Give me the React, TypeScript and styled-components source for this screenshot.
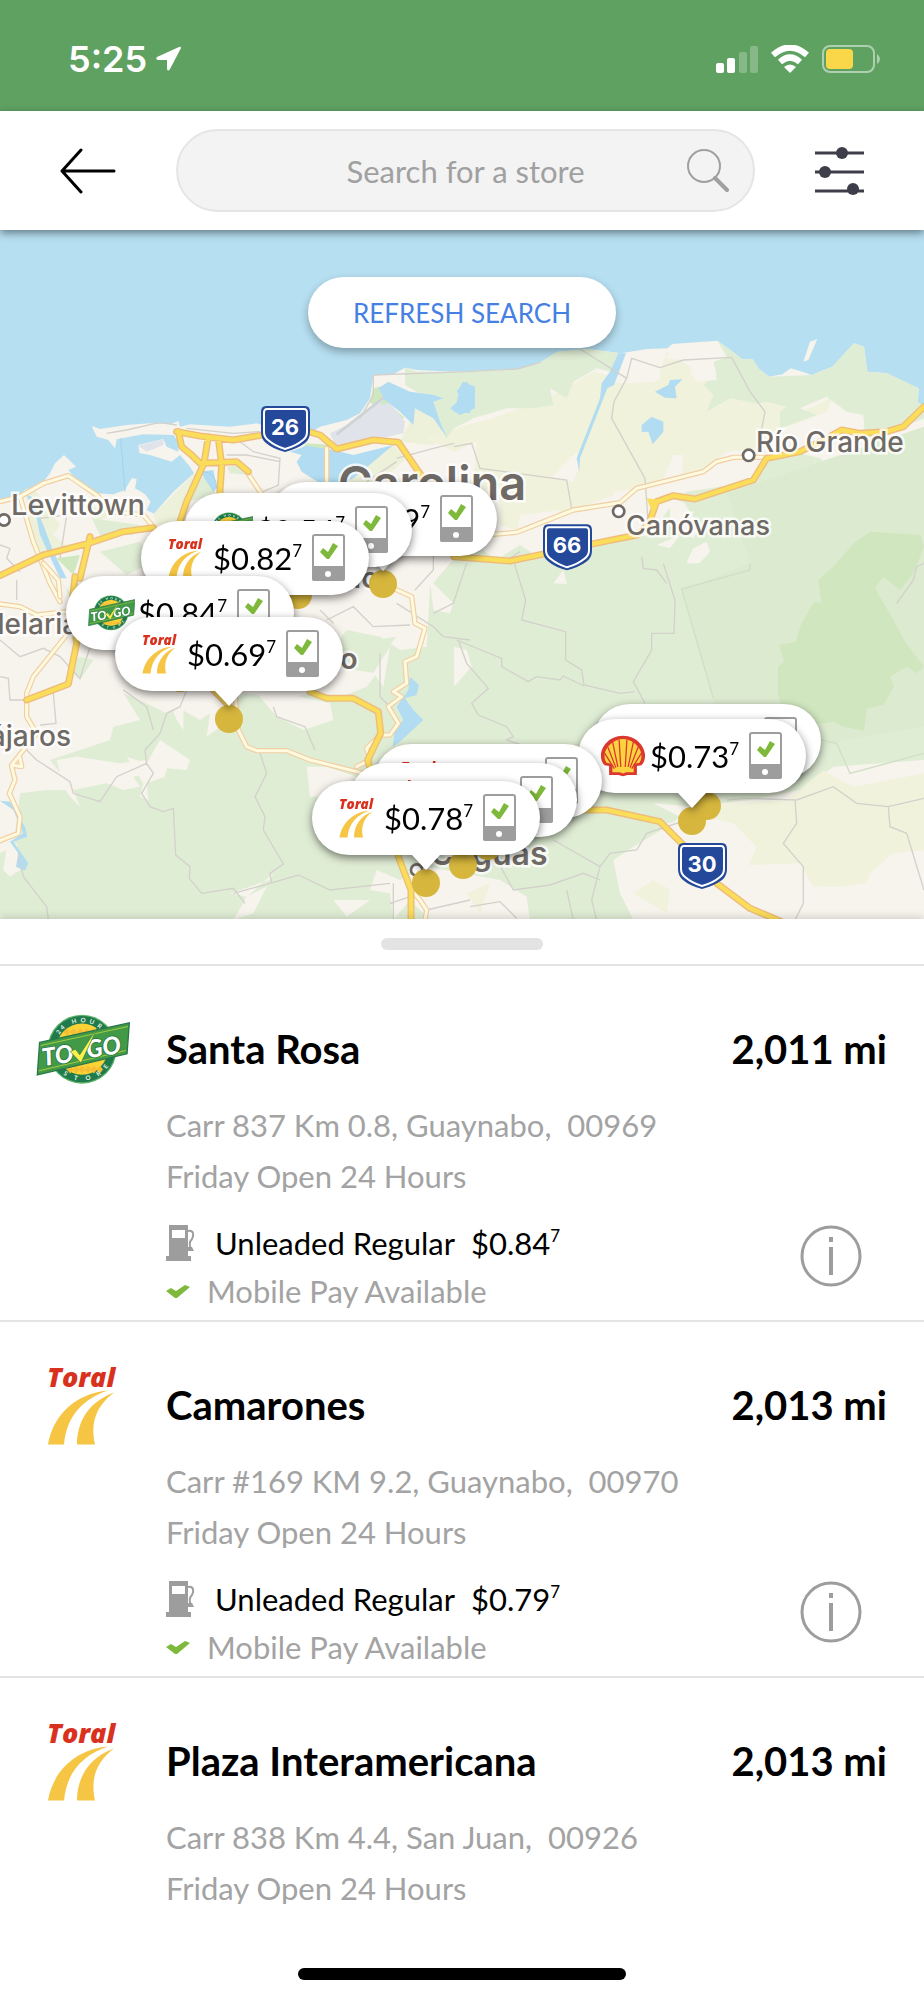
import React from "react";
import styled, { createGlobalStyle } from "styled-components";

const GlobalStyle = createGlobalStyle`
  * { box-sizing: border-box; }
  body { margin: 0; background: #fff; color: #000; font-family: Lato, "Liberation Sans", sans-serif; }
  button { font: inherit; color: inherit; background: none; border: 0; padding: 0; cursor: pointer; }
  h2, p, ul { margin: 0; padding: 0; }
  ul { list-style: none; }
  svg { display: block; flex: none; }
`;

const Screen = styled.main`
  display: flex;
  flex-direction: column;
  min-height: 100vh;
  background: #fff;
`;

const StatusBar = styled.div`
  display: flex;
  align-items: center;
  justify-content: space-between;
  height: 111px;
  padding: 6px 44px 0 68px;
  background: #5ea161;
  color: #fff;
`;

const StatusGroup = styled.div<{ $gap: number }>`
  display: flex;
  align-items: center;
  gap: ${(p) => p.$gap}px;
`;

const Clock = styled.time`
  font: 600 36px/44px Inter, sans-serif;
`;

const Header = styled.header`
  position: relative;
  z-index: 2;
  display: flex;
  align-items: center;
  gap: 60px;
  padding: 18px 60px;
  background: #fff;
  box-shadow: 0 3px 8px rgba(0, 0, 0, 0.45);
`;

const SearchField = styled.label`
  position: relative;
  flex: 1;
  min-width: 0;
  display: flex;
`;

const SearchInput = styled.input`
  width: 100%;
  height: 83px;
  padding: 0 72px;
  border: 2px solid #e5e5e5;
  border-radius: 42px;
  background: #f3f3f3;
  font: 400 31px/36px Lato, sans-serif;
  text-align: center;
  color: #333;
  outline: 0;
  &::placeholder { color: #a0a0a0; opacity: 1; }
`;

const SearchGlyph = styled.span`
  position: absolute;
  right: 26px;
  top: 20px;
`;

const MapArea = styled.section`
  position: relative;
  height: 689px;
  overflow: hidden;
  background: #b6dff1;
`;

const MapDrawing = styled.svg`
  width: 100%;
  height: 100%;
`;

const RefreshButton = styled.button`
  position: absolute;
  z-index: 1;
  top: 47px;
  left: 50%;
  transform: translateX(-50%);
  height: 71px;
  padding: 0 45px;
  border-radius: 36px;
  background: #fff;
  color: #4680e2;
  font-size: 26px;
  line-height: 32px;
  white-space: nowrap;
  box-shadow: 0 4px 8px rgba(0, 0, 0, 0.3);
`;

/* Places on the map are measured from its horizontal centre and its top edge. */
const Spot = styled.div<{ $x: number; $y: number }>`
  position: absolute;
  left: calc(50% + ${(p) => p.$x - 462}px);
  top: ${(p) => p.$y}px;
`;

const PlaceName = styled(Spot)<{ $size: number; $weight: number }>`
  font: ${(p) => p.$weight} ${(p) => p.$size}px/36px Inter, sans-serif;
  color: #6f6a65;
  white-space: nowrap;
  -webkit-text-stroke: 5px rgba(255, 255, 255, 0.8);
  paint-order: stroke fill;
`;

const Dot = styled(Spot)`
  width: 28px;
  height: 28px;
  border-radius: 50%;
  background: #d6b63d;
`;

const Pin = styled(Spot)`
  filter: drop-shadow(0 3px 4px rgba(0, 0, 0, 0.5));
`;

const PinBody = styled.button`
  display: flex;
  align-items: center;
  width: 228px;
  height: 74px;
  padding: 0 24px 0 20px;
  border-radius: 37px;
  background: #fff;
`;

const PinTail = styled.div`
  width: 28px;
  height: 15px;
  margin: 0 auto;
  background: #fff;
  clip-path: polygon(0 0, 100% 0, 50% 100%);
`;

const PinLogo = styled.span`
  display: flex;
  justify-content: center;
  width: 50px;
  margin-right: 2px;
`;

const Price = styled.span`
  flex: 1;
  font-size: 31px;
  line-height: 36px;
  text-align: left;
  white-space: nowrap;
  color: #000;
  sup { font-size: 17px; line-height: 0; vertical-align: 13px; }
`;

const Sheet = styled.section`
  position: relative;
  z-index: 1;
  flex: 1;
  display: flex;
  flex-direction: column;
  background: #fff;
  box-shadow: 0 -2px 8px rgba(0, 0, 0, 0.15);
`;

const Grip = styled.div`
  padding: 19px 0 14px;
  border-bottom: 2px solid #e4e4e4;
  &::before {
    content: "";
    display: block;
    width: 162px;
    height: 12px;
    margin: 0 auto;
    border-radius: 6px;
    background: #e3e3e3;
  }
`;

const StoreRow = styled.li`
  display: flex;
  align-items: flex-start;
  padding: 43px 37px 11px 0;
  border-bottom: 2px solid #e4e4e4;
  &:last-child { border-bottom: 0; }
`;

const StoreLogo = styled.div`
  flex: none;
  display: flex;
  align-items: center;
  justify-content: center;
  width: 166px;
  height: 80px;
`;

const StoreBody = styled.div`
  flex: 1;
  min-width: 0;
  padding-top: 16px;
`;

const TitleLine = styled.div`
  display: flex;
  justify-content: space-between;
  font-size: 40px;
  line-height: 48px;
  font-weight: 700;
  margin-bottom: 34px;
`;

const StoreName = styled.h2`
  font: inherit;
`;

const Detail = styled.p`
  font-size: 31px;
  line-height: 36px;
  color: #a3a3a3;
  white-space: pre-wrap;
`;

const Hours = styled(Detail)`
  margin-top: 15px;
  height: 34px;
  overflow: hidden;
`;

const FuelBlock = styled.div`
  display: flex;
  align-items: flex-start;
  justify-content: space-between;
  margin-top: 33px;
  padding-right: 25px;
`;

const FuelLines = styled.div`
  display: flex;
  flex-direction: column;
  gap: 12px;
`;

const FuelLine = styled.div<{ $gap: number }>`
  display: flex;
  align-items: center;
  gap: ${(p) => p.$gap}px;
  font-size: 31px;
  line-height: 36px;
`;

const FuelName = styled.span`
  margin-right: -4px;
`;

const HomeIndicator = styled.div`
  width: 328px;
  height: 12px;
  margin: auto auto 20px;
  border-radius: 6px;
  background: #000;
`;

/* ---------- brand logos ---------- */

const ring: [string, number][] = [
  ["2", -54], ["4", -42], ["H", -16], ["O", 2], ["U", 20], ["R", 37],
];
const ringLow: [string, number][] = [
  ["S", 34], ["T", 12], ["O", -12], ["R", -34], ["E", -54],
];

const ToGoLogo = ({ width }: { width: number }) => (
  <svg width={width} height={Math.round(width * 0.76)} viewBox="47 67 284 216" role="img" aria-label="To Go 24 hour store">
    <circle cx="186" cy="174" r="105" fill="#5cb267" />
    <circle cx="186" cy="174" r="101" fill="#1f7a4d" />
    <circle cx="186" cy="174" r="78" fill="#fbd336" />
    <g fill="#f6bd35">
      {[0, 1, 2, 3, 4, 5].map((i) => (
        <path key={i} d={`M${130 + i * 20} 122l10-12 10 12-10 12zM${140 + i * 18} 236l10-12 10 12-10 12z`} />
      ))}
    </g>
    <g fill="#e9f5e4" fontFamily="Lato, sans-serif" fontWeight="700" fontSize="19" textAnchor="middle">
      {ring.map(([c, a], i) => (
        <text key={i} x="186" y="92" transform={`rotate(${a} 186 174)`}>{c}</text>
      ))}
      {ringLow.map(([c, a], i) => (
        <text key={i} x="186" y="270" transform={`rotate(${a} 186 174)`}>{c}</text>
      ))}
    </g>
    <path d="M57 153 330 94 323 188 50 252z" fill="#439a46" stroke="#27774b" strokeWidth="4" />
    <path d="M60 163 326 105M54 240 320 178" stroke="#a5cc3e" strokeWidth="3" />
    <g fill="#fff" stroke="#27774b" strokeWidth="5" paintOrder="stroke" fontFamily="Lato, sans-serif" fontWeight="900" fontStyle="italic" fontSize="74">
      <text x="68" y="226" transform="rotate(-9 68 226)">TO</text>
      <text x="203" y="202" transform="rotate(-9 203 202)">GO</text>
    </g>
    <path d="M150 181 166 174 179 191 233 108 183 216z" fill="#fdf04a" stroke="#27774b" strokeWidth="2" />
  </svg>
);

const ToralLogo = ({ width }: { width: number }) => (
  <svg width={width} height={Math.round(width * 1.12)} viewBox="0 0 72 80" role="img" aria-label="Toral">
    <text x="0" y="21" fill="#d8321f" fontFamily="'Open Sans', sans-serif" fontWeight="800" fontStyle="italic" fontSize="27">Toral</text>
    <path d="M1 79C6 50 28 28 61 25 38 33 20 48 17 79z" fill="#f5c543" />
    <path d="M30 79C30 56 42 36 67 27 50 40 43 56 48 79z" fill="#f5c543" />
  </svg>
);

const ShellLogo = () => (
  <svg width="46" height="42" viewBox="437 521 140 130" role="img" aria-label="Shell">
    <path d="M464 645V617L450 615C440 605 438 592 439 580 441 558 462 524 507 523 552 524 573 558 575 580 576 592 574 605 564 615L550 617V645H521L507 649 493 645z" fill="#dd3830" />
    <path d="M474 636V611L456 607C447 594 449 577 455 566 467 546 484 534 507 533 530 534 547 546 559 566 565 577 567 594 558 607L540 611V636H517L507 640 497 636z" fill="#fbd33f" />
    <path d="M500 620 495 536M491 620 475 543M485 622 460 558M480 625 450 577M514 620 519 536M523 620 539 543M529 622 554 558M534 625 564 577" stroke="#dd3830" strokeWidth="4" />
  </svg>
);

/* ---------- icons ---------- */

const PhoneIcon = () => (
  <svg width="33" height="48" viewBox="0 0 33 48" aria-hidden="true">
    <rect x="1" y="1" width="31" height="45" rx="2" fill="#fff" stroke="#9d9d9d" strokeWidth="2" />
    <path d="M0 32H33V45a2 2 0 0 1-2 2H2a2 2 0 0 1-2-2z" fill="#9d9d9d" />
    <circle cx="16" cy="40" r="3" fill="#fff" />
    <path d="M8 18 11 14 16 18 21 9 26 12 17 25 15 25z" fill="#7fb93b" />
  </svg>
);

const PumpIcon = () => (
  <svg width="29" height="36" viewBox="0 0 29 36" aria-hidden="true">
    <path fillRule="evenodd" d="M3 0H22V31H25V36H0V31H3zM6 5V13H19V5z" fill="#9d9d9d" />
    <path d="M22 6C28 5 28 10 26 14 23 17 23 20 25 24H22" fill="none" stroke="#9d9d9d" strokeWidth="2" />
    <path d="M22 22H26L28 26H22z" fill="#9d9d9d" />
  </svg>
);

const CheckIcon = () => (
  <svg width="24" height="13" viewBox="0 0 24 13" aria-hidden="true">
    <path d="M0 6 5 3 10 6 19 0 24 2 11 13 9 13z" fill="#7fb93b" />
  </svg>
);

const InfoIcon = () => (
  <svg width="62" height="62" viewBox="0 0 62 62" fill="none" aria-hidden="true">
    <circle cx="31" cy="31" r="29" stroke="#9d9d9d" strokeWidth="3" />
    <path d="M31 12V17M31 22V50" stroke="#9d9d9d" strokeWidth="4" />
  </svg>
);

const Shield = ({ x, y, label }: { x: number; y: number; label: string }) => (
  <g transform={`translate(${x} ${y}) scale(3)`}>
    <path d="M5 0H44Q49 0 49 6V26Q49 33 44 37 36 43 24 46 12 43 5 37 0 33 0 26V6Q0 0 5 0z" fill="#24499a" />
    <path d="M6 3H43Q46 3 46 7V26Q46 31 42 34 35 40 24 43 14 40 7 34 3 31 3 26V7Q3 3 6 3z" fill="none" stroke="#fff" strokeWidth="2" />
    <text x="24" y="29" textAnchor="middle" fill="#fff" fontFamily="Inter, sans-serif" fontWeight="700" fontSize="22">{label}</text>
  </g>
);

/* ---------- map ---------- */

const Roads = ({ d, minor }: { d: string; minor?: boolean }) => (
  <g fill="none" strokeLinejoin="round" strokeLinecap="round">
    <path d={d} stroke={minor ? "#f0cfa4" : "#eebb7c"} strokeWidth={minor ? 16 : 21} />
    <path d={d} stroke={minor ? "#fefadf" : "#fadd58"} strokeWidth={minor ? 9 : 13} />
  </g>
);

const Terrain = () => (
  <MapDrawing viewBox="0 690 2772 2067" preserveAspectRatio="xMidYMin slice" aria-hidden="true">
    <rect y="690" width="2772" height="2067" fill="#b6dff1" />
    <g transform="translate(0 675)">
      <path
        fill="#f7f3ed"
        d="M0 825 55 815 75 795 130 770 150 745 165 715 192 690 228 725 205 735 225 760 290 805 340 808 375 795 395 760 410 762 405 790 435 808 452 830 440 855 462 866 520 800 582 745 570 725 540 690 515 710 450 690 418 684 415 660 490 642 500 665 535 680 535 650 520 630 430 628 350 643 345 670 325 645 290 635 275 603 300 612 380 600 450 595 510 598 535 588 540 605 570 598 690 605 770 595 800 605 930 625 960 605 1040 585 1080 565 1110 520 1120 450 1180 448 1215 428 1250 435 1362 440 1552 432 1622 412 1672 380 1762 372 1862 385 1942 372 2002 370 2017 357 2062 367 2152 347 2187 372 2227 403 2257 402 2277 432 2307 455 2347 448 2372 430 2407 440 2434 450 2497 425 2562 355 2592 365 2602 440 2662 445 2697 470 2757 490 2752 530 2772 545V2100H0z"
      />
      <path fill="#eef1d9" d="M75 800 100 790 180 900 160 930 200 960 120 1000 90 900zM225 830 340 860 300 890 260 850zM460 870 582 745 620 760 560 830 540 900 470 900zM1080 720 1180 660 1220 700 1140 770 1040 775zM1250 540 1340 600 1300 660 1200 650 1230 590z" />
      <path fill="#f0f2db" d="M1280 640 1400 600 1480 580 1640 520 1700 490 1780 440 1820 450 1870 475 1970 470 2000 380 2140 470 2250 520 2370 540 2360 570 2440 545 2500 515 2480 560 2350 610 2290 640 2270 670 2180 680 2100 740 2000 760 1900 790 1760 840 1700 860 1600 880 1560 920 1500 900 1500 800 1420 790 1430 650 1362 680z" />
      <path fill="#e0edd5" d="M1215 428 1250 440 1362 440 1552 432 1622 412 1672 380 1762 372 1862 385 1830 440 1790 430 1720 470 1700 520 1650 490 1660 540 1600 550 1520 550 1420 580 1362 610 1340 640 1300 560 1250 500 1215 480zM2152 347 2187 372 2227 403 2257 402 2277 432 2307 455 2434 450 2497 425 2562 355 2592 365 2602 440 2662 445 2757 490 2752 530 2772 545V580L2700 610 2560 640 2540 560 2480 515 2400 550 2450 570 2340 610 2340 560 2360 545 2300 530 2270 535 2190 520 2120 560 2140 510 2110 480 2150 450 2140 410 2180 395z" />
      <path fill="#e0edd5" d="M570 770 620 755 650 810 560 830zM275 880 420 900 400 930 300 930zM680 725 730 720 750 750 690 745zM300 980 420 950 460 1010 380 1050zM1362 1060 1480 1010 1560 960 1620 1000 1760 960 1880 940 1950 930 2000 860 2060 800 2260 770 2310 705 2400 685 2460 700 2500 740 2420 780 2460 830 2530 750 2590 650 2640 610 2700 690 2772 760V1120H1362z" />
      <path fill="#f7f3ed" d="M2017 357 2152 347 2180 395 2140 410 2150 465 2090 470 2070 440 2080 410 2000 400zM1870 475 1830 470 1870 385 1980 385 1980 465zM1650 760 1730 680 1740 720 1720 770zM2020 690 2050 690 2045 750 1990 760zM2410 410 2430 350 2452 342 2425 405zM2440 710 2500 740 2510 760 2475 805 2455 770 2485 755zM2540 560 2590 570 2600 700 2605 800 2580 740 2530 730 2570 700 2540 610 2440 620 2490 580zM2010 825 2050 830 2100 905 2080 940 2010 900zM1970 960 2040 930 2010 970zM2080 970 2120 950 2130 980 2080 1035 2060 1010zM1560 870 1680 855 1640 950 1550 930zM1840 800 1930 790 1960 900 1860 920z" />
      <path fill="#cfe8bf" d="M1120 490 1160 480 1155 520 1170 540 1215 580 1150 580 1110 530zM920 655 1000 660 970 675 910 665zM170 1000 240 990 220 1050z" />
      <path fill="#e0e4ea" d="M1165 505 1140 540 1170 535 1215 590 1210 625 1120 645 1010 670 990 625 1060 590zM415 662 490 643 490 660 440 680z" />
      <path fill="none" stroke="#cfd2d6" strokeWidth="8" d="M1165 507 1010 628" />
      <path fill="#b1dcf1" d="M870 680 920 662 1000 675 1060 690 1180 660 1120 710 1060 760 1030 775 960 775 905 740 890 710 905 690zM1135 490 1165 470 1230 500 1300 510 1330 520 1300 530 1320 590 1342 640 1300 580 1245 550 1240 600 1200 560 1155 525zM1370 500 1390 470 1425 485 1425 550 1380 570 1350 550 1385 520zM1362 560 1385 475 1400 470 1425 500 1410 565zM80 810 95 815 130 900 160 980 200 1060 180 1060 120 930 110 880zM600 740 640 735 650 790 640 800zM1855 385 1878 385 1842 480 1822 490 1740 700 1738 740 1730 700 1800 520 1805 475 1830 440zM1965 500 2005 480 2010 465 2048 463 2025 485 2030 520 1995 518zM1925 600 1955 575 1990 590 1990 620 1958 658 1945 620 1925 622z" />
      <path fill="none" stroke="#d3d1cb" strokeWidth="4" d="M320 625 380 615 480 592 530 600M560 610 700 625 780 620M720 650 760 680 840 700 835 780 790 800M680 690 740 690 840 710M1120 450V510L1080 580M1120 450 1400 440 1552 432 1622 412M1740 372 1880 460 1842 530 1835 580 1935 760 1945 900M1880 460 1895 400 1980 428 2050 405 2195 397 2250 500 2295 560 2270 690M1362 665 1415 655 1440 730 1700 765 1715 850M1190 700 1300 670 1362 655M1100 770 1190 710M0 960 30 970 20 1000 60 1040M120 880 200 870 180 1000M2640 620 2700 730 2772 775M2772 770 2350 900M1560 980 1530 1000 1580 1120 1570 1190" />
      <path fill="none" stroke="#a0d2f3" strokeWidth="3" d="M362 640 375 800M605 740Q650 740 650 790" />
    </g>
    <g transform="translate(0 1680)">
      <path fill="#e0edd5" d="M1500 10H2772V600L2500 620 2400 690 2250 720 2080 740 1960 730 2040 770 2000 800 1900 860 1840 900 1860 1000 1900 1080H0V880L40 860 60 700 140 690 220 690 150 600 240 570 330 540 340 500 420 480 370 400 440 430 500 460 530 440 600 480 660 440 740 400 850 420 930 400 1000 420 1100 380 1130 340 1060 330 1010 250 1040 210 1140 230 1200 270 1280 260 1290 80 1410 -60z" />
      <path fill="#dceacf" d="M2772 -400 2180 -200 2250 10 2050 90 2140 420 2250 620 2540 540 2772 500z" />
      <path fill="#d0e6bf" d="M2500 20 2562 -50 2612 -85 2762 -75 2772 -40 2740 40 2700 90 2650 50 2625 85 2685 190 2715 245 2772 320 2750 340 2720 320 2670 350 2682 380 2650 435 2600 445 2592 512 2530 500 2500 485 2400 500 2350 460 2334 400 2334 320 2352 305 2337 255 2387 245 2405 190 2442 125 2465 130 2455 60z" />
      <path fill="#f0f2db" d="M2470 630 2520 660 2560 680 2620 670 2772 640V870L2680 880 2610 940 2600 970 2520 980 2440 980 2400 910 2240 915 2270 860 2120 790 2080 740 2360 720z" />
      <path fill="#f7f3ed" d="M2120 770 2200 790 2270 860 2240 930 2400 910 2440 980 2590 1000 2570 1080H2230L2140 980 2030 940 2080 1020 2030 1040 1880 1020 1850 900 1900 870 1990 850 2000 790zM1130 930 1200 960 1280 920 1500 960 1580 1010 1590 1080H1290L1230 1020 1180 1080 1170 1000 1110 990zM190 680 170 600 230 590 360 610 440 600 450 640 400 650 420 680 370 690 320 670 220 690 240 740 210 710zM480 540 570 600 560 630 500 625 495 650 440 670 445 720 420 710 430 670 380 590 440 610zM640 390 700 420 690 480 620 530zM510 430 620 410 600 470 550 450 550 510 530 480zM770 400 850 400 990 430 1000 480 910 510 830 470zM920 620 980 620 1070 650 1080 700 930 710zM820 940 720 1030 740 1010 690 1000 810 960zM20 860 50 850 60 930 30 950 10 930zM740 1010 800 980 760 1060 700 1080zM1000 1020 1110 1020 1040 1070zM1362 260 1400 270 1415 320 1362 380zM1660 70 1690 30 1700 72zM1290 60 1360 130 1350 160 1300 150zM1170 260 1150 380 1120 340zM2720 940 2772 920V980L2680 950z" />
      <path fill="#e0edd5" d="M175 60 230 120 220 150 200 90zM200 320 240 290 280 300 240 360zM1040 220 1070 215 1050 270zM1120 240 1190 230 1140 290z" />
      <path fill="#f0f2db" d="M1400 1000 1470 970 1440 1060zM1900 1000 1960 960 2010 990 2000 1060z" />
      <path fill="#b1dcf1" d="M1230 350 1257 375 1250 405 1215 415 1240 450 1270 480 1200 545 1178 560 1185 510 1210 480 1190 440 1225 390zM0 722 30 725 75 800 82 830 40 845 85 910 75 932 48 920 55 880 30 845 70 820 40 750z" />
      <path fill="none" stroke="#d3d1cb" strokeWidth="4" d="M0 350 25 355 30 420H75M0 240 60 290 130 265 180 290 240 355 280 230M50 60V120M160 400 168 490 120 495M50 540 110 600 210 665 220 700 300 725 350 650 440 610 435 570 480 520 500 460 540 440 560 390M370 390 440 440 460 510M440 610 460 640 425 700 450 740 490 755 520 745 527 885 570 920 568 955 605 1000 700 985 735 1030M700 1000 810 970 895 945 990 990 1170 970M780 580 800 640 765 710 795 770 790 810 850 912 810 940 815 970M820 440 830 470 915 500 945 570M980 180 1060 140 1120 200 1230 195M960 150 1000 190M1300 -50V30L1245 90M1400 10 1360 130 1300 160M1190 130 1300 200 1330 230 1410 240M1140 280V410L1180 450M55 880 70 950 140 1040 145 1080M1180 970V1080M1170 1030 1260 1000M1280 1050 1410 1020M1540 1 1577 120 1565 180 1697 215V300L1745 330 1752 375 1860 400 1905 395M1370 240 1505 295V320L1585 365 1610 350 1680 360 1690 348 1752 378M1375 240 1400 310 1465 385 1415 430 1435 465 1520 500 1540 530 1520 540 1580 560M1990 10 2025 120 2022 220H1955V270L1900 365 1935 430M1925 -10 1930 25 1970 30 2000 70M2180 720 2240 715 2390 720 2500 680 2570 730 2665 740 2772 715M2385 720 2390 790 2350 850 2410 920V1030L2385 1080M2665 740 2670 800 2720 820 2772 990M1800 920 1830 880 1910 870 1940 820 2060 780M1660 840 1800 920 1775 1020 1790 1080M1480 880 1540 990 1650 975 1750 940 1800 960M1700 990 1720 1080M1410 1040 1500 1025 1550 1075M2772 10 2750 20 2740 60 2690 130" />
      <path fill="none" stroke="#d0dfc5" strokeWidth="4" d="M2250 10V30L2045 87 2140 415M2190 480 2510 550 2550 640 2772 580" />
    </g>
    <g transform="translate(0 675)">
      <Roads minor d="M0 830 60 815 130 775 205 752 290 810 340 860 430 870 460 905M60 815 100 950 150 1075 180 1130M740 740 790 815M980 670V800M1480 928 1550 922 1720 855 1860 833 1910 790 2110 740 2150 710 2200 697H2300" />
      <Roads d="M530 620 600 633 700 645 800 628M535 620 545 665 575 690 600 715 710 710 745 740M625 635 612 715 560 830 530 920M655 640 665 720 658 830M0 1052 130 990 265 955 370 920 460 908M270 935 240 1060M925 620 960 630 1010 672 1120 645 1195 652 1290 790M1362 995 1530 1008 1640 985M1770 958 1910 930 1945 900 1970 830 2020 812 2085 822 2260 765 2300 700 2400 680 2480 640 2525 615 2580 625 2660 620 2710 605 2772 545" />
      <path d="M1940 820 1980 825 1960 870z" fill="#fadd58" />
    </g>
    <g transform="translate(0 1680)">
      <Roads minor d="M0 132 60 140 110 165 200 155M130 10 175 60 180 110M220 200 100 350 80 400V470L110 520 35 615 65 620 60 595M35 620 45 660 28 700 60 770 55 820 0 842M705 400 715 510 740 560 770 572H860L930 600 1010 620 1090 640M1180 85 1235 110 1245 190 1275 205 1250 290 1215 305 1220 370 1180 395 1205 410 1165 440 1195 490 1170 525H1140L1100 565 1110 600 1070 620M1235 990 1260 1020 1280 1050 1275 1080" />
      <Roads d="M225 50 215 140 230 250 205 372 80 420M640 390 690 440M930 395 980 415H1060L1135 455 1142 520 1103 600 1130 690M1195 890 1233 990V1080M1740 750H1820L1980 785 2070 875M2150 970 2250 1045 2380 1100" />
    </g>
    <g fill="#fff" stroke="#6f6a65" strokeWidth="8">
      <circle cx="12" cy="1560" r="17" />
      <circle cx="2246" cy="1366" r="17" />
      <circle cx="1856" cy="1534" r="17" />
      <circle cx="1250" cy="2610" r="17" />
    </g>
    <Shield x={783} y={1218} label="26" />
    <Shield x={1629} y={1573} label="66" />
    <Shield x={2034} y={2529} label="30" />
  </MapDrawing>
);

const places = [
  { name: "Levittown", x: 11, y: 257, size: 29, weight: 500 },
  { name: "Río Grande", x: 756, y: 194, size: 28, weight: 500 },
  { name: "Canóvanas", x: 626, y: 278, size: 27, weight: 500 },
  { name: "Carolina", x: 338, y: 235, size: 47, weight: 600 },
  { name: "Candelaria", x: -66, y: 376, size: 28, weight: 500 },
  { name: "Pájaros", x: -28, y: 488, size: 28, weight: 500 },
  { name: "Trujillo", x: 284, y: 330, size: 29, weight: 600 },
  { name: "Alto", x: 301, y: 411, size: 29, weight: 600 },
  { name: "Caguas", x: 430, y: 606, size: 32, weight: 600 },
];

type Brand = "togo" | "toral" | "shell";

const pins: { x: number; y: number; brand: Brand; price: string }[] = [
  { x: 269, y: 252, brand: "toral", price: "$0.79" },
  { x: 184, y: 263, brand: "togo", price: "$0.54" },
  { x: 141, y: 291, brand: "toral", price: "$0.82" },
  { x: 66, y: 346, brand: "togo", price: "$0.84" },
  { x: 115, y: 387, brand: "toral", price: "$0.69" },
  { x: 593, y: 474, brand: "shell", price: "$0.73" },
  { x: 578, y: 489, brand: "shell", price: "$0.73" },
  { x: 374, y: 514, brand: "toral", price: "$0.78" },
  { x: 349, y: 533, brand: "toral", price: "$0.78" },
  { x: 312, y: 551, brand: "toral", price: "$0.78" },
];

const stores: {
  name: string;
  distance: string;
  address: string;
  brand: Brand;
  price?: string;
}[] = [
  { name: "Santa Rosa", distance: "2,011 mi", address: "Carr 837 Km 0.8, Guaynabo,  00969", brand: "togo", price: "$0.84" },
  { name: "Camarones", distance: "2,013 mi", address: "Carr #169 KM 9.2, Guaynabo,  00970", brand: "toral", price: "$0.79" },
  { name: "Plaza Interamericana", distance: "2,013 mi", address: "Carr 838 Km 4.4, San Juan,  00926", brand: "toral" },
];

const PinBrand = ({ brand }: { brand: Brand }) =>
  brand === "togo" ? <ToGoLogo width={47} /> : brand === "toral" ? <ToralLogo width={36} /> : <ShellLogo />;

export default function App() {
  return (
    <Screen>
      <GlobalStyle />
      <StatusBar>
        <StatusGroup $gap={8}>
          <Clock>5:25</Clock>
          <svg width="26" height="26" viewBox="0 0 26 26" aria-hidden="true">
            <path d="M24 1 2 11Q0 13 3 14H12V23Q13 26 15 23L26 2Q26 0 24 1z" fill="#fff" />
          </svg>
        </StatusGroup>
        <StatusGroup $gap={13}>
          <svg width="42" height="28" viewBox="0 0 42 28" fill="#fff" aria-hidden="true">
            <rect x="0" y="18" width="8" height="10" rx="2" />
            <rect x="11" y="13" width="8" height="15" rx="2" />
            <rect x="23" y="7" width="8" height="21" rx="2" opacity="0.25" />
            <rect x="34" y="1" width="8" height="27" rx="2" opacity="0.25" />
          </svg>
          <svg width="38" height="28" viewBox="0 0 38 28" fill="none" stroke="#fff" aria-hidden="true">
            <path d="M2 10Q19-5 36 10M9 17Q19 8 29 17" strokeWidth="6" />
            <path d="M19 28 13 22Q19 17 25 22z" fill="#fff" stroke="none" />
          </svg>
          <svg width="58" height="28" viewBox="0 0 58 28" aria-hidden="true">
            <rect x="1" y="1" width="51" height="26" rx="7" fill="none" stroke="#fff" strokeOpacity="0.5" strokeWidth="2" />
            <rect x="4" y="4" width="27" height="20" rx="4" fill="#fad748" />
            <path d="M55 9Q58 11 58 14T55 19z" fill="#fff" opacity="0.5" />
          </svg>
        </StatusGroup>
      </StatusBar>

      <Header>
        <button aria-label="Back">
          <svg width="56" height="46" viewBox="0 0 56 46" fill="none" stroke="#000" strokeWidth="3" strokeLinecap="round" strokeLinejoin="round" aria-hidden="true">
            <path d="M21 2 2 23 21 44M2 23H54" />
          </svg>
        </button>
        <SearchField>
          <SearchInput type="text" placeholder="Search for a store" aria-label="Search for a store" />
          <SearchGlyph>
            <svg width="42" height="43" viewBox="0 0 42 43" fill="none" stroke="#a0a0a0" aria-hidden="true">
              <circle cx="17" cy="17" r="16" strokeWidth="2" />
              <path d="M28 29 40 41" strokeWidth="4" strokeLinecap="round" />
            </svg>
          </SearchGlyph>
        </SearchField>
        <button aria-label="Filters">
          <svg width="49" height="50" viewBox="0 0 49 50" fill="#3e3e4a" aria-hidden="true">
            <path d="M0 7H49M0 26H49M0 45H49" stroke="#3e3e4a" strokeWidth="3" />
            <circle cx="27" cy="7" r="6" />
            <circle cx="10" cy="26" r="6" />
            <circle cx="38" cy="43" r="6" />
          </svg>
        </button>
      </Header>

      <MapArea aria-label="Map of stores">
        <Terrain />
        {places.map((p) => (
          <PlaceName key={p.name} $x={p.x} $y={p.y} $size={p.size} $weight={p.weight}>{p.name}</PlaceName>
        ))}
        {pins.map((p, i) => (
          <Dot key={i} $x={p.x + 100} $y={p.y + 88} />
        ))}
        {pins.map((p, i) => (
          <Pin key={i} $x={p.x} $y={p.y}>
            <PinBody>
              <PinLogo><PinBrand brand={p.brand} /></PinLogo>
              <Price>{p.price}<sup>7</sup></Price>
              <PhoneIcon />
            </PinBody>
            <PinTail />
          </Pin>
        ))}
        <RefreshButton>REFRESH SEARCH</RefreshButton>
      </MapArea>

      <Sheet>
        <Grip />
        <ul>
          {stores.map((s) => (
            <StoreRow key={s.name}>
              <StoreLogo>{s.brand === "togo" ? <ToGoLogo width={94} /> : <ToralLogo width={72} />}</StoreLogo>
              <StoreBody>
                <TitleLine>
                  <StoreName>{s.name}</StoreName>
                  <span>{s.distance}</span>
                </TitleLine>
                <Detail>{s.address}</Detail>
                <Hours>Friday Open 24 Hours</Hours>
                {s.price && (
                  <FuelBlock>
                    <FuelLines>
                      <FuelLine $gap={20}>
                        <PumpIcon />
                        <FuelName>Unleaded Regular</FuelName>
                        <Price>{s.price}<sup>7</sup></Price>
                      </FuelLine>
                      <FuelLine $gap={17}>
                        <CheckIcon />
                        <Detail>Mobile Pay Available</Detail>
                      </FuelLine>
                    </FuelLines>
                    <button aria-label={`About ${s.name}`}><InfoIcon /></button>
                  </FuelBlock>
                )}
              </StoreBody>
            </StoreRow>
          ))}
        </ul>
        <HomeIndicator />
      </Sheet>
    </Screen>
  );
}
